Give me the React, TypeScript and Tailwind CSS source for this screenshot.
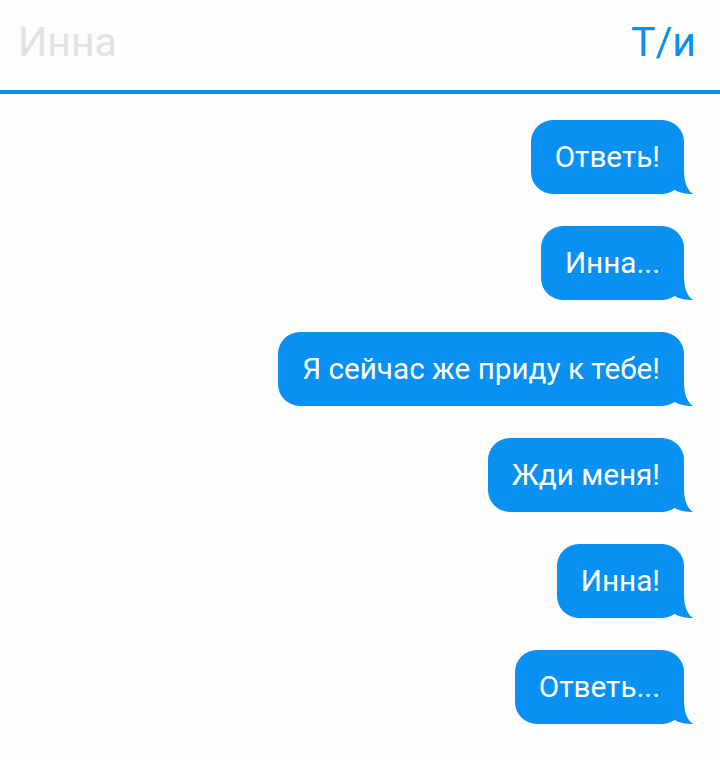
import React from "react";

const messages: string[] = [
  "Ответь!",
  "Инна...",
  "Я сейчас же приду к тебе!",
  "Жди меня!",
  "Инна!",
  "Ответь...",
];

const Bubble: React.FC<{ text: string }> = ({ text }) => (
  <div className="relative self-end">
    <div className="relative z-10 h-[74px] flex items-center rounded-[22px] bg-[#0890f2] px-6 text-[29.7px] text-white leading-none">
      {text}
    </div>
    <svg
      className="absolute right-[-9px] bottom-0 z-0"
      width="22"
      height="24"
      viewBox="0 0 22 24"
    >
      <path d="M0 0 L13 0 C13 10 15 19 22 24 C15 24 8 23 2 19 Z" fill="#0890f2" />
    </svg>
  </div>
);

export default function App() {
  return (
    <div className="w-[720px] h-[760px] bg-[#fdfdfe] overflow-hidden font-['Roboto',sans-serif]">
      <header className="h-[94px] flex items-center justify-between pl-[18px] pr-[24px] pb-[6px] border-b-4 border-[#0890f2]">
        <span className="text-[41px] text-[#e2e1e5] leading-none">Инна</span>
        <span className="text-[41px] text-[#0890f2] leading-none">Т/и</span>
      </header>
      <main className="flex flex-col gap-8 pt-[26px] pr-9">
        {messages.map((m, i) => (
          <Bubble key={i} text={m} />
        ))}
      </main>
    </div>
  );
}
